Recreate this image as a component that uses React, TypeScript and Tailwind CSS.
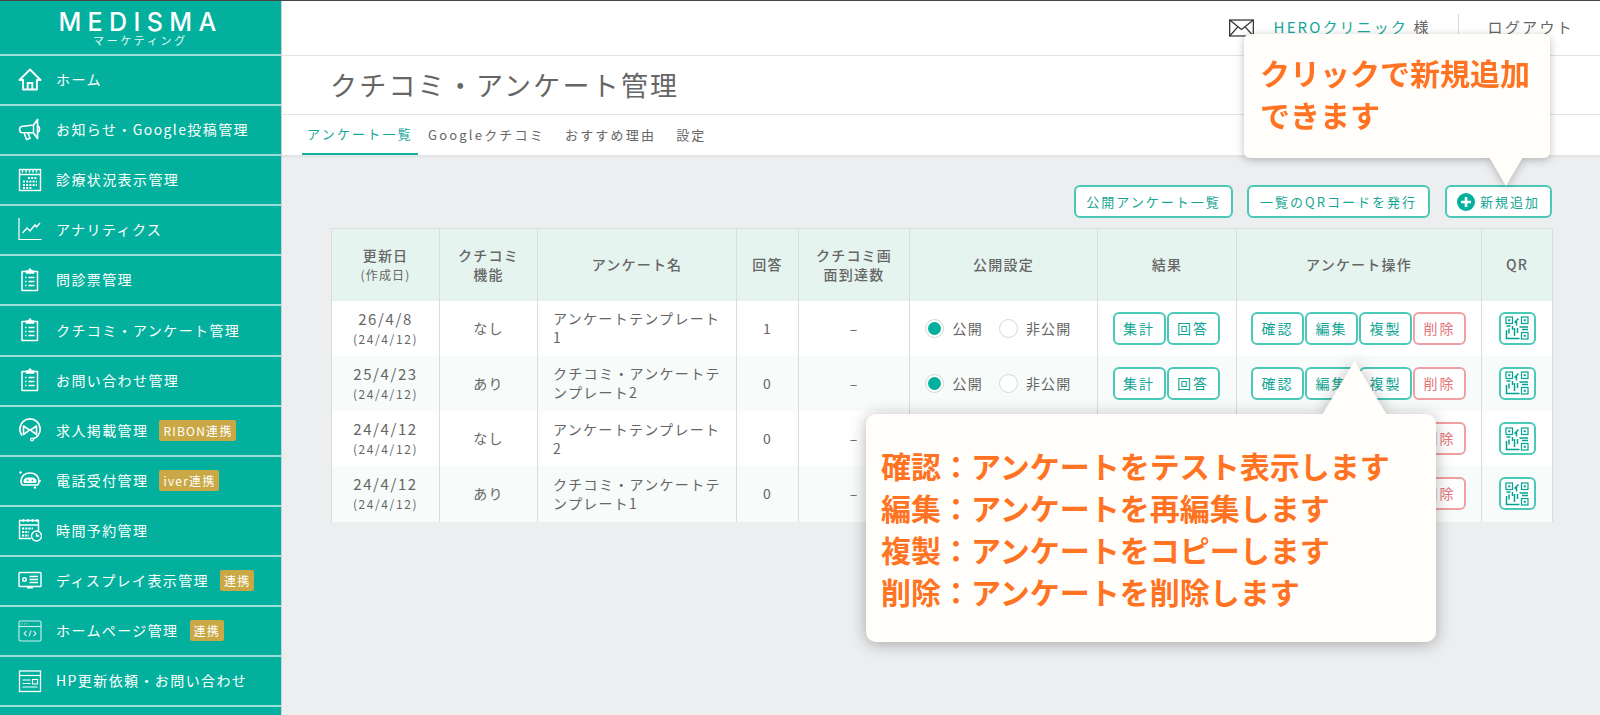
import type { ReactNode } from "react";

const iconClass = "h-[24px] w-[24px] fill-none stroke-white stroke-[1.4]";

function HomeIcon() {
    return (
        <svg viewBox="0 0 24 24" className={iconClass}>
            <path d="M1.5 12 12 1.5 22.500 12h-3.600v9.500H5.100V12z" strokeWidth="1.900" strokeLinejoin="round" />
            <path d="M9.700 21.500v-6.500h4.600v6.500" strokeWidth="1.900" />
        </svg>
    );
}

function MegaphoneIcon() {
    return (
        <svg viewBox="0 0 24 24" className={iconClass}>
            <path d="M3.500 8.500 15.500 7 19.500 1.500v19L15.500 15 3.500 14.500C1 14 1 9 3.500 8.500z" strokeWidth="1.700" strokeLinejoin="round" />
            <path d="M15.500 7v8" strokeWidth="1.400" />
            <path d="M6 14.500l2.500 7 3.500-1.200-2.200-5.800M19.500 8c2.400.3 2.900 5.700 0 6" strokeWidth="1.600" />
        </svg>
    );
}

function CalendarIcon() {
    return (
        <svg viewBox="0 0 24 24" className={iconClass}>
            <rect x="1.500" y="1.500" width="21" height="21" />
            <path d="M1.500 6.500h21M4.500 1.500v3M8 1.500v3M11.500 1.500v3M15 1.500v3M18.500 1.500v3" />
            <path d="M10 10h9M5 13.500h14M5 17h14M5 20h9" strokeWidth="2" strokeDasharray="2 1.200" />
        </svg>
    );
}

function ChartIcon() {
    return (
        <svg viewBox="0 0 24 24" className={iconClass}>
            <path d="M1 0v21.500h22.500" strokeWidth="1.200" />
            <path d="M4.500 15l4.500-5 3 3 5-6 1.500 2 3.500-4" strokeWidth="1.400" />
        </svg>
    );
}

function ClipboardIcon() {
    return (
        <svg viewBox="0 0 24 24" className={iconClass}>
            <path d="M8.500 3.500h-4.500v19h15.500v-19h-4.500" strokeWidth="1.500" strokeLinejoin="round" />
            <path d="M8.500 5V3h2l1.500-2 1.500 2h2v2z" fill="white" />
            <path d="M7 9.500h1.500M10.500 9.500h6M7 13.500h1.500M10.500 13.500h6M7 17.500h1.500M10.500 17.500h6" strokeWidth="1.500" />
        </svg>
    );
}

function RibonIcon() {
    return (
        <svg viewBox="0 0 24 24" className={iconClass}>
            <path d="M4 17.500A10.200 10.200 0 1 1 20 17.500c-1.200 1.600-3 2.800-5 3.300" strokeWidth="1.800" />
            <path d="M5.500 8 11.500 12 5.500 16.500zM18.500 8 12.500 12 18.500 16.500z" strokeWidth="1.600" strokeLinejoin="round" />
            <circle cx="14" cy="21.500" r="1.400" strokeWidth="1.300" />
        </svg>
    );
}

function IverIcon() {
    return (
        <svg viewBox="0 0 24 24" className={iconClass}>
            <path d="M3 13c0-5 4-8 9-8s9 3 9 8c0 1.500-.5 3-1.500 4H4.500C3.500 16 3 14.500 3 13z" strokeWidth="1.700" />
            <path d="M6 13c0-2 1.500-3 3-3h6c1.500 0 3 1 3 3v1.500H6z" fill="white" strokeWidth="1" />
            <circle cx="9.500" cy="12.300" r="0.900" fill="#03b09d" stroke="none" />
            <circle cx="14.500" cy="12.300" r="0.900" fill="#03b09d" stroke="none" />
            <circle cx="2.500" cy="4.500" r="1.200" fill="white" stroke="none" />
            <circle cx="17" cy="19.500" r="1.200" fill="white" stroke="none" />
            <path d="M21 13h2" />
        </svg>
    );
}

function ScheduleIcon() {
    return (
        <svg viewBox="0 0 24 24" className={iconClass}>
            <path d="M13 20.500H1.500v-18h19V13" />
            <path d="M1.500 7h19M5.500 1v3M10 1v3M14.500 1v3M19 1v3" />
            <path d="M4 10.500h11M4 14h7M4 17.500h7" strokeWidth="1.800" strokeDasharray="2.200 1" />
            <circle cx="18.500" cy="18" r="5" fill="#03b09d" />
            <path d="M18.500 15.200V18h2.600" />
        </svg>
    );
}

function DisplayIcon() {
    return (
        <svg viewBox="0 0 24 24" className={iconClass}>
            <rect x="1" y="4.500" width="22" height="14" rx="0.800" strokeWidth="1.400" />
            <circle cx="6.500" cy="11.500" r="1.800" />
            <path d="M11.500 8.500h8.500M11.500 11.500h8.500M11.500 14.500h8.500" />
            <path d="M9 19.800h6" />
        </svg>
    );
}

function CodeIcon() {
    return (
        <svg viewBox="0 0 24 24" className={iconClass} opacity="0.8">
            <rect x="1" y="2" width="22" height="20" rx="1.500" strokeWidth="1.100" />
            <path d="M1 7.500h22" strokeWidth="1.100" />
            <path d="M3.500 4.800h.8M6 4.800h.8M8.500 4.800h.8" strokeWidth="1.300" />
            <path d="M8.500 12 6 14.500 8.500 17M15.500 12l2.500 2.500-2.500 2.500M13 11.500 11 17.500" strokeWidth="1.100" />
        </svg>
    );
}

function PageIcon() {
    return (
        <svg viewBox="0 0 24 24" className={iconClass}>
            <rect x="1.500" y="2" width="21" height="20.500" strokeWidth="1.300" />
            <path d="M1.500 6.500h21" strokeWidth="1.200" />
            <path d="M4.500 11h8M4.500 14.500h8M4.500 18h15" strokeWidth="1.100" />
            <rect x="14.500" y="10.500" width="5" height="4.500" strokeWidth="1.100" />
        </svg>
    );
}

function EnvelopeIcon() {
    return (
        <svg viewBox="0 0 26 18" className="h-[18px] w-[25px] fill-none stroke-[#333] stroke-[1.3]">
            <rect x="0.700" y="0.700" width="24.600" height="16.600" />
            <path d="M0.700 0.700 13 10.500 25.300 0.700M0.700 17.300l8.500-9.500M25.300 17.300l-8.500-9.500" />
        </svg>
    );
}

function PlusIcon() {
    return (
        <svg viewBox="0 0 18 18" className="h-[18px] w-[18px]">
            <circle cx="9" cy="9" r="9" fill="#03b09d" />
            <path d="M9 4v10M4 9h10" stroke="white" strokeWidth="2.600" />
        </svg>
    );
}

function QrIcon() {
    return (
        <svg viewBox="0 0 24 24" className="h-[24px] w-[24px] fill-none stroke-[#03a392] stroke-[1.200]">
            <rect x="1" y="1" width="6.500" height="6.500" />
            <rect x="16.500" y="1" width="6.500" height="6.500" />
            <rect x="16.500" y="16.500" width="6.500" height="6.500" />
            <path d="M3.200 3.200h2.100v2.100H3.200zM18.700 3.200h2.100v2.100h-2.100zM18.700 18.700h2.100v2.100h-2.100z" fill="#03a392" stroke="none" />
            <path d="M9.500 6.500 13.500 2.500M11.500 4.500v5M1.500 10h4M7.500 10v4M4 12.500v5M1.500 14v8.500h13M9.500 12v8M12.500 12v5M14.500 11h8.500M17 13.500h6" strokeWidth="1.500" />
        </svg>
    );
}

function Badge({ children }: { children: ReactNode }) {
    return (
        <span className="ml-[11px] rounded-[2px] bg-[#c9a845] px-[4px] text-[12px] leading-[21px] tracking-[1.2px] whitespace-nowrap text-white">
            {children}
        </span>
    );
}

const menu: { icon: ReactNode; label: string; badge?: string }[] = [
    { icon: <HomeIcon />, label: "ホーム" },
    { icon: <MegaphoneIcon />, label: "お知らせ・Google投稿管理" },
    { icon: <CalendarIcon />, label: "診療状況表示管理" },
    { icon: <ChartIcon />, label: "アナリティクス" },
    { icon: <ClipboardIcon />, label: "問診票管理" },
    { icon: <ClipboardIcon />, label: "クチコミ・アンケート管理" },
    { icon: <ClipboardIcon />, label: "お問い合わせ管理" },
    { icon: <RibonIcon />, label: "求人掲載管理", badge: "RIBON連携" },
    { icon: <IverIcon />, label: "電話受付管理", badge: "iver連携" },
    { icon: <ScheduleIcon />, label: "時間予約管理" },
    { icon: <DisplayIcon />, label: "ディスプレイ表示管理", badge: "連携" },
    { icon: <CodeIcon />, label: "ホームページ管理", badge: "連携" },
    { icon: <PageIcon />, label: "HP更新依頼・お問い合わせ" },
];

function Sidebar() {
    return (
        <aside className="flex h-full w-[282px] shrink-0 flex-col border-r border-[#cfd3d3] bg-[#03b09d]">
            {/* ロゴ */}
            <div className="flex h-[55px] shrink-0 flex-col items-center border-b-2 border-white/60 text-white">
                <span className="mt-[8px] font-['Inter',sans-serif] text-[25px] leading-[26px] font-medium tracking-[6.400px]">
                    MEDISMA
                </span>
                <span className="text-[11px] leading-[11px] tracking-[2.700px] text-white/90">マーケティング</span>
            </div>

            {menu.map((item) => (
                <div
                    key={item.label}
                    className="flex h-[50.1px] shrink-0 items-center border-b-2 border-white/60 pb-[1px] pl-[18px] text-[14px] tracking-[1.4px] text-white"
                >
                    <span className="flex w-[24px] justify-center">{item.icon}</span>
                    <span className="ml-[14px] whitespace-nowrap">{item.label}</span>
                    {item.badge && <Badge>{item.badge}</Badge>}
                </div>
            ))}
        </aside>
    );
}

function Outline({ children, danger, className }: { children: ReactNode; danger?: boolean; className?: string }) {
    return (
        <span
            className={`flex h-[33px] items-center justify-center rounded-[6px] border-2 bg-white text-[14px] tracking-[2px] ${
                danger ? "border-[#f0a0a3] text-[#e57377]" : "border-[#4ac8b8] text-[#14a595]"
            } ${className ?? ""}`}
        >
            {children}
        </span>
    );
}

function Radio({ on, label }: { on?: boolean; label: string }) {
    return (
        <span className="flex items-center">
            <span className="flex h-[19px] w-[19px] items-center justify-center rounded-full border border-[#d5d8d8] bg-white">
                {on && <span className="h-[13px] w-[13px] rounded-full bg-[#03b09d]" />}
            </span>
            <span className="ml-[8px]">{label}</span>
        </span>
    );
}

const rows = [
    { date: "26/4/8", review: "なし", name: "アンケートテンプレート1", count: "1" },
    { date: "25/4/23", review: "あり", name: "クチコミ・アンケートテンプレート2", count: "0" },
    { date: "24/4/12", review: "なし", name: "アンケートテンプレート2", count: "0" },
    { date: "24/4/12", review: "あり", name: "クチコミ・アンケートテンプレート1", count: "0" },
];

const cell = "border-l border-[#d9dddd] first:border-l-0 text-center align-middle";
const head = `${cell} font-medium`;

function SurveyTable() {
    return (
        <table className="w-[1221px] table-fixed border-collapse border-t border-r border-l border-[#d9dddd] text-[14px] tracking-[1.2px] text-[#666]">
            <colgroup>
                <col className="w-[108px]" />
                <col className="w-[98px]" />
                <col className="w-[199px]" />
                <col className="w-[62px]" />
                <col className="w-[111px]" />
                <col className="w-[188px]" />
                <col className="w-[139px]" />
                <col className="w-[245px]" />
                <col className="w-[71px]" />
            </colgroup>
            <thead className="bg-[#e5f4ef]">
                <tr className="h-[72px] leading-[19px]">
                    <th className={head}>
                        更新日
                        <br />
                        <span className="text-[12px] font-normal">(作成日)</span>
                    </th>
                    <th className={head}>
                        クチコミ
                        <br />
                        機能
                    </th>
                    <th className={head}>アンケート名</th>
                    <th className={head}>回答</th>
                    <th className={head}>
                        クチコミ画
                        <br />
                        面到達数
                    </th>
                    <th className={head}>公開設定</th>
                    <th className={head}>結果</th>
                    <th className={head}>アンケート操作</th>
                    <th className={head}>QR</th>
                </tr>
            </thead>
            <tbody>
                {rows.map((row, i) => (
                    <tr key={i} className={`h-[55.25px] ${i % 2 === 1 ? "bg-[#f7fbfa]" : "bg-white"}`}>
                        <td className={`${cell} leading-[19px]`}>
                            <span className="text-[15px] tracking-[1.6px]">{row.date}</span>
                            <br />
                            <span className="text-[12px] tracking-[1.6px]">(24/4/12)</span>
                        </td>
                        <td className={cell}>{row.review}</td>
                        <td className={`${cell} pr-[11px] pl-[15px] text-left leading-[19px] tracking-[1.300px]`}>{row.name}</td>
                        <td className={cell}>{row.count}</td>
                        <td className={cell}>–</td>
                        <td className={cell}>
                            <div className="flex justify-center gap-[16px] pr-[10px]">
                                <Radio on label="公開" />
                                <Radio label="非公開" />
                            </div>
                        </td>
                        <td className={cell}>
                            <div className="flex justify-center gap-[1px] pr-[2px]">
                                <Outline className="w-[53px]">集計</Outline>
                                <Outline className="w-[53px]">回答</Outline>
                            </div>
                        </td>
                        <td className={cell}>
                            <div className="flex justify-center gap-[1px] pr-[1px]">
                                <Outline className="w-[53px]">確認</Outline>
                                <Outline className="w-[53px]">編集</Outline>
                                <Outline className="w-[53px]">複製</Outline>
                                <Outline danger className="w-[53px]">
                                    削除
                                </Outline>
                            </div>
                        </td>
                        <td className={cell}>
                            <div className="flex justify-center">
                                <Outline className="w-[37px]">
                                    <QrIcon />
                                </Outline>
                            </div>
                        </td>
                    </tr>
                ))}
            </tbody>
        </table>
    );
}

export default function App() {
    return (
        <div className="relative flex h-[715px] w-[1600px] overflow-hidden border-t border-[#444] bg-[#eceef0] [font-family:'Noto_Sans_CJK_JP','Noto_Sans',sans-serif] text-[#666]">
            <Sidebar />

            <main className="flex min-w-0 flex-1 flex-col">
                {/* ヘッダー */}
                <header className="flex h-[55px] shrink-0 items-center justify-end border-b border-[#e3e5e5] bg-white pr-[26px] pb-[1px]">
                    <EnvelopeIcon />
                    <span className="ml-[20px] text-[15px] tracking-[2.100px]">
                        <span className="text-[#14a899]">HEROクリニック</span> 様
                    </span>
                    <span className="mr-[28px] ml-[28px] h-[28px] w-px bg-[#dcdcdc]" />
                    <span className="text-[15px] tracking-[2.300px]">ログアウト</span>
                </header>

                {/* タイトル */}
                <div className="flex h-[59px] shrink-0 items-center border-b border-[#e3e5e5] bg-white pl-[48px]">
                    <h1 className="text-[27px] font-normal tracking-[2.200px]">クチコミ・アンケート管理</h1>
                </div>

                {/* タブ */}
                <nav className="flex h-[41px] shrink-0 items-stretch border-b border-[#e3e5e5] bg-white pl-[20px] text-[13px] tracking-[2.200px] shadow-[0_1px_2px_rgba(0,0,0,0.06)]">
                    <span className="flex w-[116px] items-center border-b-[2px] border-[#14b3a0] pl-[5px] whitespace-nowrap text-[#14a899]">
                        アンケート一覧
                    </span>
                    <span className="ml-[10px] flex items-center">Googleクチコミ</span>
                    <span className="ml-[20px] flex items-center">おすすめ理由</span>
                    <span className="ml-[20px] flex items-center">設定</span>
                </nav>

                {/* コンテンツ */}
                <div className="flex flex-1 flex-col pt-[29px] pl-[49px]">
                    <div className="flex w-[1221px] justify-end">
                        <Outline className="w-[159px] !text-[13px]">公開アンケート一覧</Outline>
                        <Outline className="ml-[14px] w-[183px] !text-[13px]">一覧のQRコードを発行</Outline>
                        <Outline className="ml-[15px] w-[107px] gap-[5px] !text-[13px]">
                            <PlusIcon />
                            新規追加
                        </Outline>
                    </div>
                    <div className="mt-[10px]">
                        <SurveyTable />
                    </div>
                </div>
            </main>

            {/* 吹き出し: 新規追加 */}
            <div className="absolute top-[33px] left-[1244px] h-[124px] w-[306px] drop-shadow-[0_2px_4px_rgba(0,0,0,0.25)]">
                <div className="h-full rounded-[6px] bg-[#fffefa] pt-[17px] pl-[16px] text-[30px] leading-[42px] font-bold text-[#ff7322]">
                    クリックで新規追加
                    <br />
                    できます
                </div>
                <div className="absolute top-[123px] left-[245px] h-[29px] w-[34px] bg-[#fffefa] [clip-path:polygon(0_0,100%_0,50%_100%)]" />
            </div>

            {/* 吹き出し: 操作説明 */}
            <div className="absolute top-[413px] left-[866px] h-[228px] w-[570px] drop-shadow-[0_2px_8px_rgba(0,0,0,0.3)]">
                <div className="h-full rounded-[10px] bg-[#fffefa] pt-[30px] pl-[15px] text-[30px] leading-[42px] font-bold text-[#ff7322]">
                    <p>確認：アンケートをテスト表示します</p>
                    <p>編集：アンケートを再編集します</p>
                    <p>複製：アンケートをコピーします</p>
                    <p>削除：アンケートを削除します</p>
                </div>
                <div className="absolute top-[-53px] left-[456px] h-[54px] w-[65px] bg-[#fffefa] [clip-path:polygon(50%_0,100%_100%,0_100%)]" />
            </div>
        </div>
    );
}
